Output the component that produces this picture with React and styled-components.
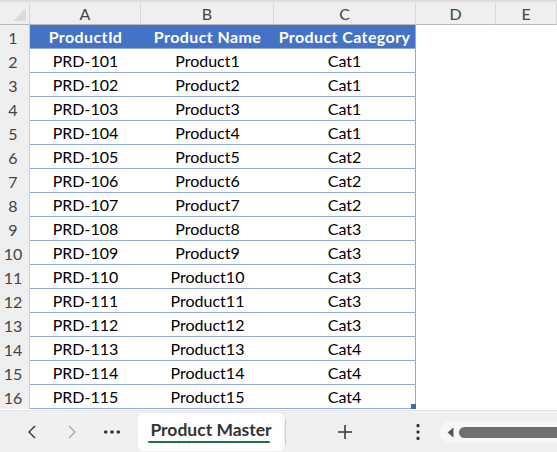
import React from "react";
import styled, { createGlobalStyle } from "styled-components";

const Global = createGlobalStyle`
  html, body { margin: 0; padding: 0; background: #ffffff; }
  body { width: 557px; height: 452px; overflow: hidden; font-family: Lato, "Open Sans", sans-serif; }
  #root { width: 557px; height: 452px; }
`;

const Page = styled.div`
  display: flex;
  flex-direction: column;
  width: 557px;
  height: 452px;
  background: #ffffff;
`;

const TopEdge = styled.div`
  height: 3px;
  background: linear-gradient(#d6d6d6, #ececec);
`;

const Sheet = styled.div`
  display: grid;
  grid-template-columns: 30px 111px 133px 142px 80px 1fr;
  grid-template-rows: 22px repeat(16, 24px);
  flex: none;
`;

const Corner = styled.div`
  position: relative;
  background: #efefef;
  border-right: 1px solid #d4d4d4;
  border-bottom: 1px solid #b9b9b9;
  &::after {
    content: "";
    position: absolute;
    right: 3px;
    bottom: 3px;
    width: 0;
    height: 0;
    border-left: 13px solid transparent;
    border-bottom: 13px solid #dadada;
  }
`;

const ColHead = styled.div`
  display: flex;
  align-items: center;
  justify-content: center;
  background: #efefef;
  border-right: 1px solid #d8d8d8;
  border-bottom: 1px solid #b9b9b9;
  color: #444444;
  font-size: 16px;
  font-weight: 400;
`;

const RowHead = styled.div`
  display: flex;
  align-items: center;
  justify-content: center;
  padding-right: 3px;
  background: #efefef;
  border-right: 1px solid #cfcfcf;
  color: #444444;
  font-size: 16px;
`;

const Cell = styled.div`
  display: flex;
  align-items: center;
  justify-content: center;
  box-sizing: border-box;
  font-size: 16px;
  letter-spacing: ${(p) => (p.$head ? "0.4px" : "0")};
  white-space: nowrap;
  background: ${(p) => (p.$head ? "#4472c4" : "#ffffff")};
  color: ${(p) => (p.$head ? "#ffffff" : "#000000")};
  font-weight: ${(p) => (p.$head ? 700 : 400)};
  border-bottom: 1px solid #8ea9db;
  border-right: ${(p) => (p.$last ? "1px solid #8ea9db" : "none")};
  position: relative;
`;

const Handle = styled.span`
  position: absolute;
  right: -1px;
  bottom: -1px;
  width: 5px;
  height: 5px;
  background: #4466bb;
`;

const Empty = styled.div`
  background: #ffffff;
`;

const TabBar = styled.div`
  flex: 1;
  display: flex;
  align-items: flex-end;
  background: #f0f0f0;
  border-top: 1px solid #e4e4e4;
  margin-top: 1px;
  overflow: hidden;
  & > * { flex-shrink: 0; }
`;

const NavGroup = styled.div`
  display: flex;
  align-items: center;
  height: 40px;
  padding-left: 12px;
`;

const NavBtn = styled.div`
  width: 40px;
  height: 40px;
  display: flex;
  align-items: center;
  justify-content: center;
  color: ${(p) => (p.$disabled ? "#a8a8a8" : "#333333")};
`;

const Tab = styled.div`
  position: relative;
  margin-left: 6px;
  width: 146px;
  height: 38px;
  background: #ffffff;
  border-radius: 6px;
  display: flex;
  align-items: center;
  justify-content: center;
  box-sizing: border-box;
  padding-bottom: 6px;
  font-size: 17.5px;
  font-weight: 700;
  color: #333333;
  margin-bottom: 1px;
`;

const Underline = styled.span`
  position: absolute;
  left: 10px;
  right: 14px;
  bottom: 8px;
  height: 2px;
  background: #1e7145;
  border-radius: 1px;
`;

const Sep = styled.div`
  width: 1px;
  height: 26px;
  background: #cfcfcf;
  margin: 0 0 7px 1px;
  align-self: flex-end;
`;

const Right = styled.div`
  display: flex;
  align-items: center;
  height: 40px;
  flex: 1 !important;
  flex-shrink: 1 !important;
  min-width: 0;
`;

const AddBtn = styled.div`
  flex-shrink: 0;
  width: 40px;
  height: 40px;
  margin-left: 39px;
  display: flex;
  align-items: center;
  justify-content: center;
  color: #333333;
`;

const MoreBtn = styled.div`
  flex-shrink: 0;
  width: 20px;
  height: 40px;
  margin-left: 43px;
  display: flex;
  align-items: center;
  justify-content: center;
`;

const Track = styled.div`
  margin-left: 12px;
  flex: 1;
  min-width: 0;
  height: 22px;
  border-radius: 11px 0 0 11px;
  background: #f7f7f7;
  display: flex;
  align-items: center;
  padding-left: 7px;
  gap: 5px;
`;

const Thumb = styled.div`
  flex: 1;
  height: 11px;
  border-radius: 6px 0 0 6px;
  background: #6f6f6f;
`;

const products = Array.from({ length: 15 }, (_, i) => {
  const n = i + 1;
  const cat = n <= 4 ? "Cat1" : n <= 7 ? "Cat2" : n <= 12 ? "Cat3" : "Cat4";
  return { id: `PRD-${100 + n}`, name: `Product${n}`, cat };
});

const cols = ["A", "B", "C", "D", "E"];

export default function App() {
  return (
    <Page>
      <Global />
      <TopEdge />
      <Sheet>
        <Corner />
        {cols.map((c) => (
          <ColHead key={c}>{c}</ColHead>
        ))}
        <RowHead>1</RowHead>
        <Cell $head>ProductId</Cell>
        <Cell $head>Product Name</Cell>
        <Cell $head $last>Product Category</Cell>
        <Empty />
        <Empty />
        {products.map((p, i) => (
          <React.Fragment key={p.id}>
            <RowHead>{i + 2}</RowHead>
            <Cell>{p.id}</Cell>
            <Cell>{p.name}</Cell>
            <Cell $last>
              {p.cat}
              {i === products.length - 1 && <Handle />}
            </Cell>
            <Empty />
            <Empty />
          </React.Fragment>
        ))}
      </Sheet>
      <TabBar>
        <NavGroup>
          <NavBtn>
            <svg width="12" height="16" viewBox="0 0 12 16" fill="none" stroke="currentColor" strokeWidth="1.4">
              <path d="M9 2 L3 8 L9 14" />
            </svg>
          </NavBtn>
          <NavBtn $disabled>
            <svg width="12" height="16" viewBox="0 0 12 16" fill="none" stroke="currentColor" strokeWidth="1.4">
              <path d="M3 2 L9 8 L3 14" />
            </svg>
          </NavBtn>
          <NavBtn>
            <svg width="16" height="4" viewBox="0 0 16 4" fill="#333">
              <rect x="0" y="0.5" width="3.4" height="3" rx="1" />
              <rect x="6.3" y="0.5" width="3.4" height="3" rx="1" />
              <rect x="12.6" y="0.5" width="3.4" height="3" rx="1" />
            </svg>
          </NavBtn>
        </NavGroup>
        <Tab>
          Product Master
          <Underline />
        </Tab>
        <Sep />
        <Right>
          <AddBtn>
            <svg width="16" height="16" viewBox="0 0 16 16" fill="none" stroke="#333" strokeWidth="1.5">
              <path d="M8 1 V15 M1 8 H15" />
            </svg>
          </AddBtn>
          <MoreBtn>
            <svg width="4" height="16" viewBox="0 0 4 16" fill="#333">
              <rect x="0.5" y="0" width="3" height="3.2" rx="1" />
              <rect x="0.5" y="6.4" width="3" height="3.2" rx="1" />
              <rect x="0.5" y="12.8" width="3" height="3.2" rx="1" />
            </svg>
          </MoreBtn>
          <Track>
            <svg width="7" height="11" viewBox="0 0 7 11" fill="#555">
              <path d="M6.5 0.5 L0.5 5.5 L6.5 10.5 Z" />
            </svg>
            <Thumb />
          </Track>
        </Right>
      </TabBar>
    </Page>
  );
}
